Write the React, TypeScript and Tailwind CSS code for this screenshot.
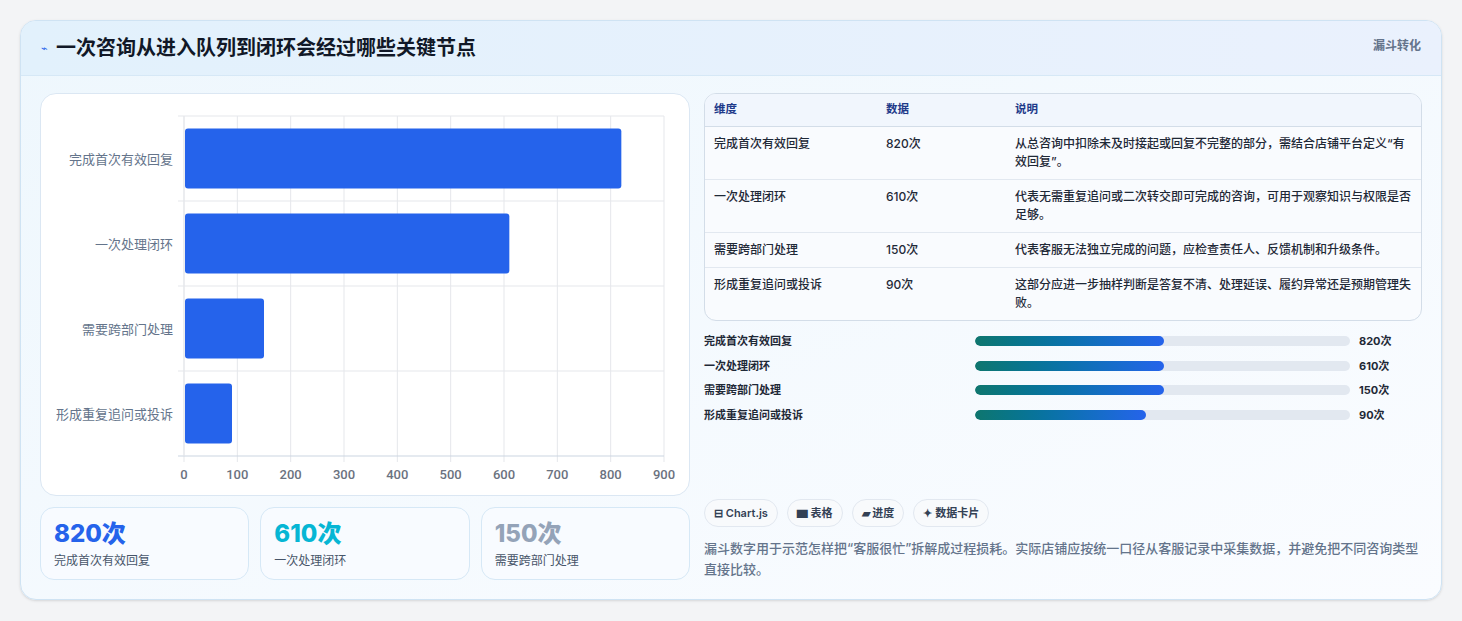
import React from "react";

const data = [
  { name: "完成首次有效回复", v: 820, desc: "从总咨询中扣除未及时接起或回复不完整的部分，需结合店铺平台定义“有效回复”。", pct: 50.5 },
  { name: "一次处理闭环", v: 610, desc: "代表无需重复追问或二次转交即可完成的咨询，可用于观察知识与权限是否足够。", pct: 50.5 },
  { name: "需要跨部门处理", v: 150, desc: "代表客服无法独立完成的问题，应检查责任人、反馈机制和升级条件。", pct: 50.5 },
  { name: "形成重复追问或投诉", v: 90, desc: "这部分应进一步抽样判断是答复不清、处理延误、履约异常还是预期管理失败。", pct: 45.5 },
];

function Chart() {
  const x0 = 143, x1 = 623, y0 = 22, y1 = 362;
  const band = (y1 - y0) / 4;
  const ticks = [0, 100, 200, 300, 400, 500, 600, 700, 800, 900];
  return (
    <svg width="650" height="400" className="block">
      {ticks.map((t) => {
        const x = x0 + (t / 900) * (x1 - x0);
        return (
          <g key={t}>
            <line x1={x} y1={y0} x2={x} y2={y1 + 6} stroke="#e5e7eb" />
            <text x={x} y={y1 + 23} textAnchor="middle" fontSize="13" fill="#6b7280" fontFamily="Roboto, sans-serif" fontWeight="500">{t}</text>
          </g>
        );
      })}
      {[0, 1, 2, 3, 4].map((i) => (
        <line key={i} x1={x0 - 6} x2={x1} y1={y0 + i * band} y2={y0 + i * band} stroke={i === 4 ? "#cbd5e1" : "#e5e7eb"} />
      ))}
      <line x1={x0} x2={x0} y1={y0} y2={y1} stroke="#e5e7eb" />
      {data.map((d, i) => {
        const cy = y0 + i * band + band / 2;
        return (
          <g key={d.name}>
            <rect x={x0 + 1} y={cy - 30} width={(d.v / 900) * (x1 - x0) - 1} height={60} rx="3" fill="#2563eb" />
            <text x={x0 - 11} y={cy + 5} textAnchor="end" fontSize="13" fill="#64748b" fontFamily="'Noto Sans CJK SC', sans-serif">{d.name}</text>
          </g>
        );
      })}
    </svg>
  );
}

export default function App() {
  return (
    <div className="bg-[#f3f4f6] w-[1462px] h-[621px] pt-[20px] pl-[20px]" style={{ fontFamily: "Inter, 'Noto Sans CJK SC', sans-serif" }}>
      <div className="w-[1422px] h-[580px] rounded-[16px] border border-[#cfe3f3] bg-gradient-to-br from-[#eef7fd] to-[#fafcff] overflow-hidden shadow-sm">
        <div className="h-[55px] flex items-center justify-between px-[20px] bg-gradient-to-r from-[#e2f1fc] to-[#eaf1fd] border-b border-[#d6e8f6]">
          <div className="flex items-center gap-[8px]">
            <span className="text-[#2563eb] text-[11px]">⌁</span>
            <span className="text-[20px] font-bold text-[#111827]">一次咨询从进入队列到闭环会经过哪些关键节点</span>
          </div>
          <span className="text-[12px] font-bold text-[#64748b] self-start mt-[16px]">漏斗转化</span>
        </div>
        <div className="flex gap-[14px] px-[19px] pt-[17px]">
          <div className="w-[650px] flex flex-col gap-[11px]">
            <div className="h-[403px] bg-white rounded-[16px] border border-[#dbe7f3] overflow-hidden">
              <Chart />
            </div>
            <div className="grid grid-cols-3 gap-[11px]">
              {[
                ["820次", "完成首次有效回复", "text-[#2563eb]"],
                ["610次", "一次处理闭环", "text-[#06b6d4]"],
                ["150次", "需要跨部门处理", "text-[#94a3b8]"],
              ].map(([v, l, c]) => (
                <div key={l} className="h-[73px] rounded-[14px] border border-[#d6e8f6] bg-[#f8fbff] px-[13px] pt-[10px]">
                  <div className={`text-[24px] font-extrabold leading-[32px] ${c}`}>{v}</div>
                  <div className="text-[12px] text-[#475569] mt-[2px]">{l}</div>
                </div>
              ))}
            </div>
          </div>
          <div className="w-[718px] h-[487px] flex flex-col">
            <div className="rounded-[12px] border border-[#d3dde8] overflow-hidden bg-[#f9fbfe]">
              <div className="flex h-[33px] items-center text-[11.5px] font-bold text-[#1e3a8a] bg-[#f1f6fd] border-b border-[#d3dde8]">
                <div className="w-[181px] pl-[9px]">维度</div>
                <div className="w-[129px]">数据</div>
                <div>说明</div>
              </div>
              {data.map((d, i) => (
                <div key={d.name} className={`flex text-[12px] font-medium text-[#1f2937] leading-[18px] py-[8px] ${i < 3 ? "border-b border-[#e2e8f0]" : ""}`}>
                  <div className="w-[181px] pl-[9px]">{d.name}</div>
                  <div className="w-[129px]">{d.v}次</div>
                  <div className="flex-1 pr-[10px]">{d.desc}</div>
                </div>
              ))}
            </div>
            <div className="flex flex-col gap-[8px] mt-[12px]">
              {data.map((d) => (
                <div key={d.name} className="flex items-center h-[16.5px] text-[11px] font-semibold text-[#1f2937]">
                  <div className="w-[271px]">{d.name}</div>
                  <div className="w-[375px] h-[10px] rounded-full bg-[#e2e8f0] overflow-hidden">
                    <div className="h-full rounded-full bg-gradient-to-r from-[#0f766e] to-[#2563eb]" style={{ width: `${d.pct}%` }} />
                  </div>
                  <div className="ml-[9px] font-bold">{d.v}次</div>
                </div>
              ))}
            </div>
            <div className="flex gap-[9px] mt-auto">
              {["⊟ Chart.js", "▆ 表格", "▰ 进度", "✦ 数据卡片"].map((c) => (
                <span key={c} className="h-[28px] px-[9px] flex items-center rounded-full border border-[#e2e8f0] bg-[#f8fafc] text-[11px] font-semibold text-[#334155]">{c}</span>
              ))}
            </div>
            <p className="mt-[11px] text-[13px] leading-[21px] text-[#64748b] font-medium">漏斗数字用于示范怎样把“客服很忙”拆解成过程损耗。实际店铺应按统一口径从客服记录中采集数据，并避免把不同咨询类型直接比较。</p>
          </div>
        </div>
      </div>
    </div>
  );
}
